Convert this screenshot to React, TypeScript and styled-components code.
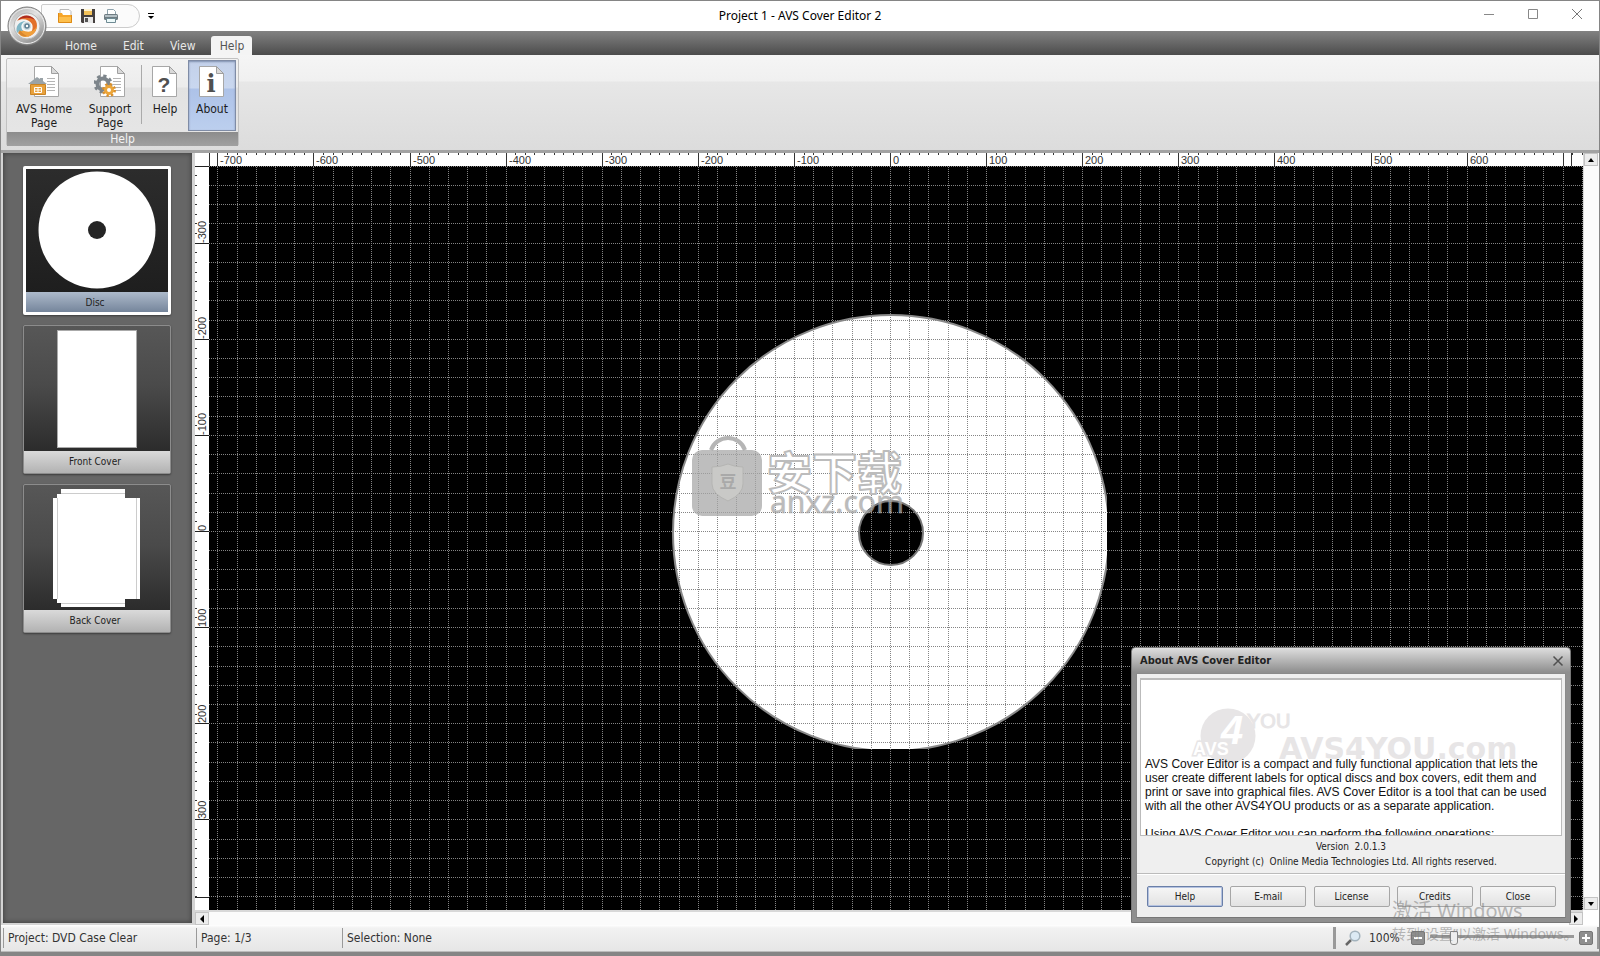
import React from "react";
import styled, { createGlobalStyle, css } from "styled-components";

const UI = `"DejaVu Sans Condensed", Tahoma, "Noto Sans", sans-serif`;

const GlobalStyle = createGlobalStyle`
  *, *::before, *::after { box-sizing: border-box; }
  body { margin: 0; background: #858585; font: 12px/14px ${UI}; color: #222; overflow: hidden; }
  button { font: inherit; color: inherit; padding: 0; margin: 0; border: 0; background: none; }
  svg { display: block; }
`;

const Window = styled.div`
  position: relative;
  display: flex;
  flex-direction: column;
  height: 100vh;
  min-height: 600px;
  border: solid #858585;
  border-width: 1px 1px 4px;
  background: #e2e2e2;
`;

/* ---------- title bar ---------- */
const TitleBar = styled.header`
  display: grid;
  grid-template-columns: 1fr auto 1fr;
  align-items: center;
  height: 30px;
  background: #fff;
  flex: none;
`;
const QuickArea = styled.div`
  display: flex;
  align-items: center;
  gap: 8px;
  padding-left: 40px;
`;
const QuickBar = styled.div`
  display: flex;
  align-items: center;
  gap: 7px;
  height: 24px;
  width: 99px;
  padding-left: 15px;
  background: #fbfbfb;
  border: 1px solid #ccc;
  border-radius: 2px 12px 12px 0;
`;
const Title = styled.h1`
  margin: 0;
  font: 400 12px/16px "Noto Sans", sans-serif;
  color: #000;
`;
const Caption = styled.div`
  display: flex;
  justify-content: flex-end;
  gap: 32px;
  padding: 0 16px 4px 0;
`;
const AppButton = styled.button`
  position: absolute;
  left: 6px;
  top: 5px;
  width: 40px;
  height: 40px;
  z-index: 2;
`;

/* ---------- ribbon ---------- */
const TabBar = styled.nav`
  display: flex;
  align-items: flex-end;
  gap: 8px;
  height: 24px;
  padding-left: 56px;
  background: linear-gradient(#828282, #4c4c4c);
  flex: none;
`;
const Tab = styled.button<{ $active?: boolean }>`
  height: 19px;
  padding: 0 8px;
  min-width: 41px;
  color: #e8e8e8;
  border-radius: 3px 3px 0 0;
  ${(p) => p.$active && css`background: #f4f4f4; color: #555;`}
`;
const Ribbon = styled.section`
  display: flex;
  align-items: flex-start;
  height: 98px;
  padding: 3px 5px;
  background: linear-gradient(#f5f5f5, #f0f0f0 26px, #e7e7e7 27px, #dcdcdc);
  border-bottom: 3px solid #a2a2a2;
  flex: none;
`;
const Group = styled.div`
  display: flex;
  flex-direction: column;
  height: 88px;
  border: 1px solid #c2c2c2;
  border-radius: 2px;
  background: linear-gradient(#f2f2f2, #ececec 28px, #e2e2e2 29px, #e6e6e6);
`;
const GroupRow = styled.div`
  display: flex;
  align-items: stretch;
  flex: 1;
  padding: 1px 2px;
`;
const GroupLabel = styled.div`
  height: 16px;
  text-align: center;
  color: #f4f4f4;
  background: linear-gradient(#8c8c8c, #a0a0a0);
`;
const RibbonButton = styled.button<{ $width: number; $active?: boolean }>`
  display: flex;
  flex-direction: column;
  align-items: center;
  gap: 4px;
  width: ${(p) => p.$width}px;
  padding-top: 5px;
  line-height: 14px;
  color: #1c1c1c;
  border: 1px solid transparent;
  ${(p) => p.$active && css`
    border: 1px solid #7f8ca6;
    background: linear-gradient(#c3d1ea, #c9d7ef 27px, #adc2e8 28px, #bccfee);
    box-shadow: inset 0 1px 2px #8090b0;
  `}
`;
const RibbonRule = styled.div`
  width: 1px;
  margin: 5px 0 7px;
  background: #aaa;
`;

/* ---------- work area ---------- */
const Main = styled.main`
  display: flex;
  flex: 1;
  min-height: 0;
  padding-left: 2px;
  background: #d4d4d4;
`;
const Side = styled.aside`
  display: flex;
  flex-direction: column;
  gap: 10px;
  width: 189px;
  padding: 13px 21px 13px 20px;
  margin: 0 2px 2px 0;
  background: #666;
  box-shadow: inset 0 0 4px 1px #444;
  flex: none;
`;
const Card = styled.button<{ $selected?: boolean }>`
  display: flex;
  flex-direction: column;
  height: 149px;
  font-size: 10px;
  color: #222;
  border-radius: 2px;
  border: ${(p) => (p.$selected ? "3px solid #fff" : "1px solid #8c8c8c")};
  background: ${(p) => (p.$selected ? "linear-gradient(#2c2c2c, #1c1c1c)" : "linear-gradient(#575757, #4a4a4a 60px, #2c2c2c 124px)")};
  box-shadow: 0 1px 2px #3c3c3c;
`;
const Art = styled.svg`
  width: 100%;
  flex: 1;
`;
const CardLabel = styled.span<{ $selected?: boolean }>`
  width: 100%;
  height: ${(p) => (p.$selected ? 20 : 22)}px;
  line-height: ${(p) => (p.$selected ? 21 : 22)}px;
  padding-right: 4px;
  text-align: center;
  background: ${(p) => (p.$selected ? "linear-gradient(#adbacb, #75859b)" : "linear-gradient(#dadada, #b2b2b2)")};
`;
const Work = styled.section`
  display: grid;
  flex: 1;
  min-width: 0;
  margin-left: 1px;
  grid-template-columns: 14px minmax(0, 1fr) 16px;
  grid-template-rows: 13px minmax(0, 1fr) 15px;
  background: #fff;
`;
const Fill = styled.svg`
  width: 100%;
  height: 100%;
`;
const Stage = styled.div`
  background: #000;
  overflow: hidden;
`;
const Bar = styled.div<{ $across?: boolean }>`
  display: flex;
  flex-direction: ${(p) => (p.$across ? "row" : "column")};
  justify-content: space-between;
  background: #fbfbfb;
  border: solid #d8d8d8;
  border-width: ${(p) => (p.$across ? "2px 0 0" : "0 0 0 1px")};
  grid-column: ${(p) => (p.$across ? "1 / 3" : "3")};
  grid-row: ${(p) => (p.$across ? "3" : "1 / 3")};
`;
const Arrow = styled.button`
  display: grid;
  place-items: center;
  width: 14px;
  height: 13px;
  background: #ececec;
  border: 1px solid #c4c4c4;
`;

/* ---------- status bar ---------- */
const Status = styled.footer`
  display: flex;
  align-items: center;
  height: 27px;
  padding: 0 0 0 2px;
  background: linear-gradient(#fff, #f2f2f2 3px, #e6e6e6);
  border-bottom: 1px solid #bbb;
  flex: none;
`;
const Cell = styled.div<{ $width?: number }>`
  display: flex;
  align-items: center;
  height: 20px;
  padding-left: 4px;
  border-left: 1px solid #999;
  font-size: 12px;
  color: #333;
  ${(p) => (p.$width ? `width: ${p.$width}px;` : "flex: 1;")}
`;
const ZoomArea = styled.div`
  display: flex;
  align-items: center;
  height: 22px;
  padding: 0 4px 0 9px;
  border: solid #999;
  border-width: 0 2px 0 3px;
`;
const ZoomValue = styled.span`
  width: 42px;
  margin-left: 8px;
  color: #333;
`;
const Step = styled.button`
  display: grid;
  place-items: center;
  width: 14px;
  height: 14px;
  background: #8f8f8f;
  border: 1px solid #777;
  border-radius: 2px;
`;
const Slider = styled.input`
  appearance: none;
  width: 144px;
  height: 14px;
  margin: 0 5px;
  background: linear-gradient(#999, #999) center 4px / 100% 3px no-repeat;
  &::-webkit-slider-thumb {
    appearance: none;
    width: 8px;
    height: 14px;
    background: #eee;
    border: 1px solid #888;
    border-radius: 1px 1px 3px 3px;
  }
`;

/* ---------- about dialog ---------- */
const Dialog = styled.div`
  position: absolute;
  right: 28px;
  bottom: 29px;
  width: 440px;
  display: flex;
  flex-direction: column;
  padding: 0 4px 4px;
  border: 1px solid #777;
  border-radius: 4px 4px 0 0;
  background: linear-gradient(#dedede, #8f8f8f 24px, #8f8f8f);
`;
const DialogHead = styled.div`
  display: flex;
  align-items: center;
  justify-content: space-between;
  height: 25px;
  padding: 1px 2px 0 4px;
`;
const DialogTitle = styled.h2`
  margin: 0;
  font-size: 11px;
  font-weight: 700;
  color: #222;
`;
const DialogBody = styled.div`
  padding: 4px 3px 0;
  background: #efefef;
  border: 1px solid #8a8a8a;
  border-bottom-color: #777;
`;
const About = styled.div`
  position: relative;
  height: 158px;
  overflow: hidden;
  background: #fff;
  border: 1px solid #bbb;
  border-width: 2px 1px 1px;
`;
const AboutText = styled.div`
  position: relative;
  padding: 77px 0 0 4px;
  font: 12px/14px "Liberation Sans", Arial, sans-serif;
  color: #111;
  white-space: nowrap;
  p { margin: 0 0 14px; }
`;
const Brand = styled.svg`
  position: absolute;
  left: 0;
  top: 0;
  width: 420px;
  height: 156px;
`;
const Facts = styled.div`
  display: flex;
  flex-direction: column;
  align-items: center;
  gap: 1px;
  height: 37px;
  padding-top: 4px;
  font-size: 10px;
  white-space: pre;
`;
const Actions = styled.div`
  display: flex;
  justify-content: space-between;
  height: 44px;
  margin: 0 -3px;
  padding: 12px 9px 0 10px;
  border-top: 1px solid #bbb;
  box-shadow: inset 0 1px #fff;
`;
const Push = styled.button<{ $focus?: boolean }>`
  width: 76px;
  height: 21px;
  font-size: 10px;
  color: #222;
  border: 1px solid ${(p) => (p.$focus ? "#6a7fa8" : "#a6a6a6")};
  border-radius: 2px;
  background: linear-gradient(#f6f6f6, #e2e2e2);
  box-shadow: ${(p) => (p.$focus ? "inset 0 0 0 1px #b4c2e0" : "none")};
`;
const Activate = styled.div`
  position: absolute;
  right: 20px;
  bottom: 9px;
  width: 187px;
  display: flex;
  flex-direction: column;
  font-family: "Noto Sans", "Noto Sans CJK SC", sans-serif;
  font-size: 14px;
  line-height: 19px;
  color: rgba(120, 120, 120, 0.5);
  white-space: nowrap;
  pointer-events: none;
  strong { font-weight: 400; font-size: 20px; line-height: 26px; }
`;

/* ---------- icons ---------- */
const Logo = () => (
  <svg width="40" height="40" viewBox="0 0 40 40">
    <defs>
      <linearGradient id="ring" x1="0" y1="0" x2="0.6" y2="1">
        <stop offset="0" stopColor="#a8a8a8" /><stop offset=".45" stopColor="#e2e2e2" /><stop offset="1" stopColor="#909090" />
      </linearGradient>
      <radialGradient id="face"><stop offset="0" stopColor="#fff" /><stop offset="1" stopColor="#ececec" /></radialGradient>
    </defs>
    <circle cx="20" cy="20" r="19" fill="url(#ring)" stroke="#7a7a7a" />
    <circle cx="20" cy="20" r="17.500" fill="none" stroke="#ededed" />
    <circle cx="20" cy="20" r="13" fill="url(#face)" stroke="#b8b8b8" />
    <path d="M10 15C14 8 25 8 29 15C32 22 28 29 20 31C24 28 27 23 25 18C22 13 15 12 10 15Z" fill="#e2702a" />
    <path d="M11 14C15 8 24 8 28 14C23 11 17 11 11 14Z" fill="#b02c1e" />
    <path d="M14 30C22 33 29 28 30 20C27 26 21 27 15 24C12 25 12 28 14 30Z" fill="#f0a03c" />
    <path d="M10 27C8 20 12 15 19 15C14 17 13 21 16 25C14 25 12 25 10 27Z" fill="#7fb6c6" />
    <path d="M11 27C14 30 17 31 20 30C16 28 14 26 13 24Z" fill="#d8862e" />
    <circle cx="20" cy="20" r="3.500" fill="#5d7f92" stroke="#cfdde2" strokeWidth="1.500" /><circle cx="20" cy="20" r="1.200" fill="#fff" />
  </svg>
);
const Folder = () => (
  <svg width="16" height="16"><path d="M3 1.500h9l2 2V9H3z" fill="#fff" stroke="#b9b9b9" /><path d="M1 5h4l1 2h9v8H2z" fill="#f6a62a" /><path d="M2 9h13v6H2z" fill="#fdbf4c" /><path d="M1.500 5v9.500h13V7" fill="none" stroke="#dd8a16" /></svg>
);
const Floppy = () => (
  <svg width="16" height="16"><path d="M1 1h14v14H2l-1-1z" fill="#45403f" /><rect x="4" y="1" width="8" height="6" fill="#f3c25a" /><rect x="4" y="1" width="8" height="2" fill="#fff3cf" /><rect x="4" y="9" width="9" height="6" fill="#e8e8e8" /><rect x="5" y="10" width="3" height="4" fill="#555" /></svg>
);
const Printer = () => (
  <svg width="16" height="16"><path d="M4.500 6V1.500h6l2 2V6" fill="#fff" stroke="#8da2ac" /><rect x="1" y="6" width="14" height="6" rx="1.500" fill="#6f7c82" /><rect x="2" y="7" width="12" height="2" fill="#b5c1c6" /><path d="M3.500 10.500h9v4h-9z" fill="#eefafa" stroke="#6f8b94" /></svg>
);
const Sheet = ({ x = 0, lines = false }: { x?: number; lines?: boolean }) => (
  <g transform={`translate(${x} 0)`}>
    <path d="M.5.5h17l7 7v23h-24z" fill="#fff" stroke="#a7a7a7" />
    <path d="M17.500.5v7h7z" fill="#d9d9d9" stroke="#a0a0a0" />
    {lines && <path d="M13 12.500h8M13 15.500h8M13 18.500h8M13 21.500h8M13 24.500h8" stroke="#b5b5b5" />}
  </g>
);
const HomeIcon = () => (
  <svg width="32" height="32"><Sheet x={6} lines />
    <path d="M0 18L9 11l3 2v-1h3v3l4 3z" fill="#9aa3a8" /><path d="M2.500 18.500h15v10h-15z" fill="#e8a13c" stroke="#c98427" /><path d="M6.500 21.500h7v5h-7zM10 21.500v5M6.500 24h7" fill="none" stroke="#fff" /></svg>
);
const SupportIcon = () => (
  <svg width="32" height="32"><Sheet x={6} lines />
    <circle cx="9" cy="18" r="7.500" fill="none" stroke="#7d858b" strokeWidth="4" strokeDasharray="3 2.890" />
    <circle cx="9" cy="18" r="5.500" fill="none" stroke="#7d858b" strokeWidth="4" />
    <circle cx="15" cy="24" r="5" fill="none" stroke="#d98f2b" strokeWidth="4" strokeDasharray="2 1.930" />
    <circle cx="15" cy="24" r="3.500" fill="#fff" stroke="#eba53a" strokeWidth="3" /></svg>
);
const GlyphIcon = ({ glyph, serif }: { glyph: string; serif?: boolean }) => (
  <svg width="26" height="32"><Sheet />
    <text x="12" y="26" textAnchor="middle" fontSize={serif ? 24 : 21} fontWeight="700" fill="#505050" fontFamily={serif ? "DejaVu Serif" : "Liberation Sans"}>{glyph}</text></svg>
);
const Tri = ({ d }: { d: string }) => <svg width="8" height="8" viewBox="0 0 8 8"><path d={d} fill="#000" /></svg>;

/* ---------- drawing area: one scale for rulers and grid ---------- */
const UNIT = 0.961;
const OX = -6;
const OY = -7;
const range = (n: number) => Array.from({ length: 2 * n + 1 }, (_, i) => i - n);
const px = (v: number) => Math.round(v * UNIT);
const majors = range(15).map((i) => i * 100);
const labelled = majors.filter((v) => v >= -700 && v <= 600);
const minors = range(150).map((i) => i * 10);

const gridPath = range(75).map((i) => `M${px(i * 20) + 0.5} -1500V1500`).join("");
const gridAcross = range(75).map((i) => `M-1501 ${px(i * 20) + 0.5}H1500`).join("");

const RulerTop = () => (
  <Fill>
    <svg x="50%" overflow="visible">
      <g transform={`translate(${OX} 0)`}>
        <path d={minors.map((v) => `M${px(v) + 0.5} 0v2`).join("")} stroke="#333" />
        <path d={majors.filter((v) => v >= -700).map((v) => `M${px(v) + 0.5} 0v13`).join("") + "M-680.500 0v13M681.500 0v13"} stroke="#333" />
        {labelled.map((v) => <text key={v} x={px(v) + 3} y="11" fontSize="11" fill="#333" fontFamily="Liberation Sans">{v}</text>)}
      </g>
    </svg>
  </Fill>
);
const RulerLeft = () => (
  <Fill>
    <svg y="50%" overflow="visible">
      <g transform={`translate(0 ${OY})`}>
        <path d={minors.filter((v) => Math.abs(v) < 390).map((v) => `M0 ${px(v) + 0.5}h2`).join("")} stroke="#333" />
        <path d={majors.filter((v) => Math.abs(v) < 390).map((v) => `M0 ${px(v) + 0.5}h14`).join("") + "M0 -364.500h14M0 366.500h14"} stroke="#222" />
        {majors.filter((v) => Math.abs(v) < 390).map((v) => (
          <text key={v} transform={`translate(11 ${px(v)}) rotate(-90)`} fontSize="11" fill="#333" fontFamily="Liberation Sans">{v}</text>
        ))}
      </g>
    </svg>
  </Fill>
);
const Canvas = () => (
  <Fill>
    <defs><clipPath id="page"><rect x="-300" y="-300" width="517" height="518" /></clipPath></defs>
    <svg x="50%" y="50%" overflow="visible">
      <g transform={`translate(${OX} ${OY})`}>
        <g clipPath="url(#page)">
          <circle cx="1" cy="2" r="218" fill="#fff" stroke="#8a8a8a" strokeWidth="2" />
        </g>
        <circle cx="1" cy="2" r="32" fill="#000" stroke="#777" strokeWidth="2" />
        <path d={gridPath + gridAcross} stroke="#848484" strokeDasharray="1 1" fill="none" shapeRendering="crispEdges" />
        <g transform="translate(-198 -95)">
          <path d="M19 14a18 18 0 0 1 34 0" fill="none" stroke="#b5b5b5" strokeWidth="4" />
          <rect y="14" width="70" height="66" rx="10" fill="#a5a5a5" fillOpacity=".72" />
          <path d="M20 31q9 0 16-3q7 3 15 3v17q0 10-15 17q-16-7-16-17z" fill="#c9c9c7" stroke="#b5b5b3" />
          <text x="36" y="52" fontSize="17" fontWeight="700" textAnchor="middle" fill="#a9a9a9" fontFamily="Noto Sans CJK SC">豆</text>
          <text x="75" y="54" fontSize="45" fontWeight="700" fill="#fff" stroke="#bcbcbc" strokeWidth="2" strokeLinejoin="round" fontFamily="Noto Sans CJK SC">安下载</text>
          <text x="78" y="77" fontSize="30" fill="#a8a8a8" fillOpacity=".75" stroke="#a8a8a8" strokeOpacity=".4" fontFamily="Noto Sans">anxz.com</text>
        </g>
      </g>
    </svg>
  </Fill>
);

const AboutDialog = () => (
  <Dialog role="dialog" aria-label="About AVS Cover Editor">
    <DialogHead>
      <DialogTitle>About AVS Cover Editor</DialogTitle>
      <button aria-label="Close dialog"><svg width="12" height="12"><path d="M1.500 1.500l9 9M10.500 1.500l-9 9" stroke="#505050" strokeWidth="1.500" /></svg></button>
    </DialogHead>
    <DialogBody>
      <About>
        <Brand>
          <g fontFamily="DejaVu Sans" fontWeight="700" fill="#e7e5e6">
            <circle cx="87" cy="56" r="27.500" />
            <text x="80" y="64" fontSize="40" fontStyle="italic" fill="#fff" fontFamily="Liberation Sans">4</text>
            <text x="106" y="48" fontSize="20" fontWeight="400" stroke="#e7e5e6" fontFamily="Liberation Sans">YOU</text>
            <text x="52" y="75" fontSize="18" fill="#fff" stroke="#e7e5e6" strokeWidth="3" paintOrder="stroke" fontFamily="Liberation Sans">AVS</text>
            <text x="138" y="79" fontSize="30">AVS4YOU.com</text>
          </g>
        </Brand>
        <AboutText>
          <p>AVS Cover Editor is a compact and fully functional application that lets the<br />user create different labels for optical discs and box covers, edit them and<br />print or save into graphical files. AVS Cover Editor is a tool that can be used<br />with all the other AVS4YOU products or as a separate application.</p>
          <p>Using AVS Cover Editor you can perform the following operations:</p>
        </AboutText>
      </About>
      <Facts>
        <span>{"Version  2.0.1.3"}</span>
        <span>{"Copyright (c)  Online Media Technologies Ltd. All rights reserved."}</span>
      </Facts>
      <Actions>
        {["Help", "E-mail", "License", "Credits", "Close"].map((t, i) => <Push key={t} $focus={i === 0}>{t}</Push>)}
      </Actions>
    </DialogBody>
  </Dialog>
);

export default function App() {
  return (
    <>
      <GlobalStyle />
      <Window>
        <AppButton aria-label="Application menu"><Logo /></AppButton>
        <TitleBar>
          <QuickArea>
            <QuickBar>
              <button aria-label="Open"><Folder /></button>
              <button aria-label="Save"><Floppy /></button>
              <button aria-label="Print"><Printer /></button>
            </QuickBar>
            <button aria-label="Customize toolbar"><svg width="6" height="8"><path d="M0 1.500h6" stroke="#000" /><path d="M0 4h6L3 7z" /></svg></button>
          </QuickArea>
          <Title>Project 1 - AVS Cover Editor 2</Title>
          <Caption>
            <button aria-label="Minimize"><svg width="12" height="12"><path d="M1 6.500h10" stroke="#888" /></svg></button>
            <button aria-label="Maximize"><svg width="12" height="12"><path d="M1.500 1.500h9v9h-9z" fill="none" stroke="#888" /></svg></button>
            <button aria-label="Close"><svg width="12" height="12"><path d="M1 1l10 10M11 1L1 11" stroke="#777" /></svg></button>
          </Caption>
        </TitleBar>
        <TabBar>
          <Tab>Home</Tab><Tab>Edit</Tab><Tab>View</Tab><Tab $active>Help</Tab>
        </TabBar>
        <Ribbon>
          <Group>
            <GroupRow>
              <RibbonButton $width={70}><HomeIcon /><span>AVS Home<br />Page</span></RibbonButton>
              <RibbonButton $width={62}><SupportIcon /><span>Support<br />Page</span></RibbonButton>
              <RibbonRule />
              <RibbonButton $width={46}><GlyphIcon glyph="?" /><span>Help</span></RibbonButton>
              <RibbonButton $width={48} $active><GlyphIcon glyph="i" serif /><span>About</span></RibbonButton>
            </GroupRow>
            <GroupLabel>Help</GroupLabel>
          </Group>
        </Ribbon>
        <Main>
          <Side>
            <Card $selected>
              <Art viewBox="0 0 142 123"><circle cx="71" cy="61" r="58.500" fill="#fff" /><circle cx="71" cy="61" r="9" fill="#252525" /></Art>
              <CardLabel $selected>Disc</CardLabel>
            </Card>
            <Card>
              <Art viewBox="0 0 146 125"><rect x="33.500" y="4.500" width="79" height="117" fill="#fff" stroke="#aaa" /></Art>
              <CardLabel>Front Cover</CardLabel>
            </Card>
            <Card>
              <Art viewBox="0 0 146 125">
                <path d="M37 4h64v9h15v101h-15v8H37v-4h-4v-4h-4V13h4V9h4z" fill="#fff" />
                <path d="M37 8.500h64M37 118.500h64M33.500 13v101M112.500 13v101" stroke="#ccc" />
              </Art>
              <CardLabel>Back Cover</CardLabel>
            </Card>
          </Side>
          <Work>
            <div />
            <RulerTop />
            <RulerLeft />
            <Stage><Canvas /></Stage>
            <Bar>
              <Arrow aria-label="Scroll up"><Tri d="M1 6h6L4 2z" /></Arrow>
              <Arrow aria-label="Scroll down"><Tri d="M1 2h6L4 6z" /></Arrow>
            </Bar>
            <Bar $across>
              <Arrow aria-label="Scroll left"><Tri d="M6 0v8L2 4z" /></Arrow>
              <Arrow aria-label="Scroll right"><Tri d="M2 0v8l4-4z" /></Arrow>
            </Bar>
          </Work>
        </Main>
        <Status>
          <Cell $width={193}>Project: DVD Case Clear</Cell>
          <Cell $width={146}>Page: 1/3</Cell>
          <Cell>Selection: None</Cell>
          <ZoomArea>
            <svg width="16" height="16"><path d="M1 15l5-5" stroke="#666" strokeWidth="2.500" /><circle cx="10" cy="6" r="4.800" fill="#dceaf4" stroke="#a3b3bd" strokeWidth="1.500" /></svg>
            <ZoomValue>100%</ZoomValue>
            <Step aria-label="Zoom out"><svg width="10" height="10"><path d="M1 5h8" stroke="#fff" strokeWidth="2" /></svg></Step>
            <Slider type="range" aria-label="Zoom" min={0} max={100} defaultValue={15} />
            <Step aria-label="Zoom in"><svg width="10" height="10"><path d="M1 5h8M5 1v8" stroke="#fff" strokeWidth="2" /></svg></Step>
          </ZoomArea>
        </Status>
        <AboutDialog />
        <Activate><strong>激活 Windows</strong><span>转到“设置”以激活 Windows。</span></Activate>
      </Window>
    </>
  );
}
